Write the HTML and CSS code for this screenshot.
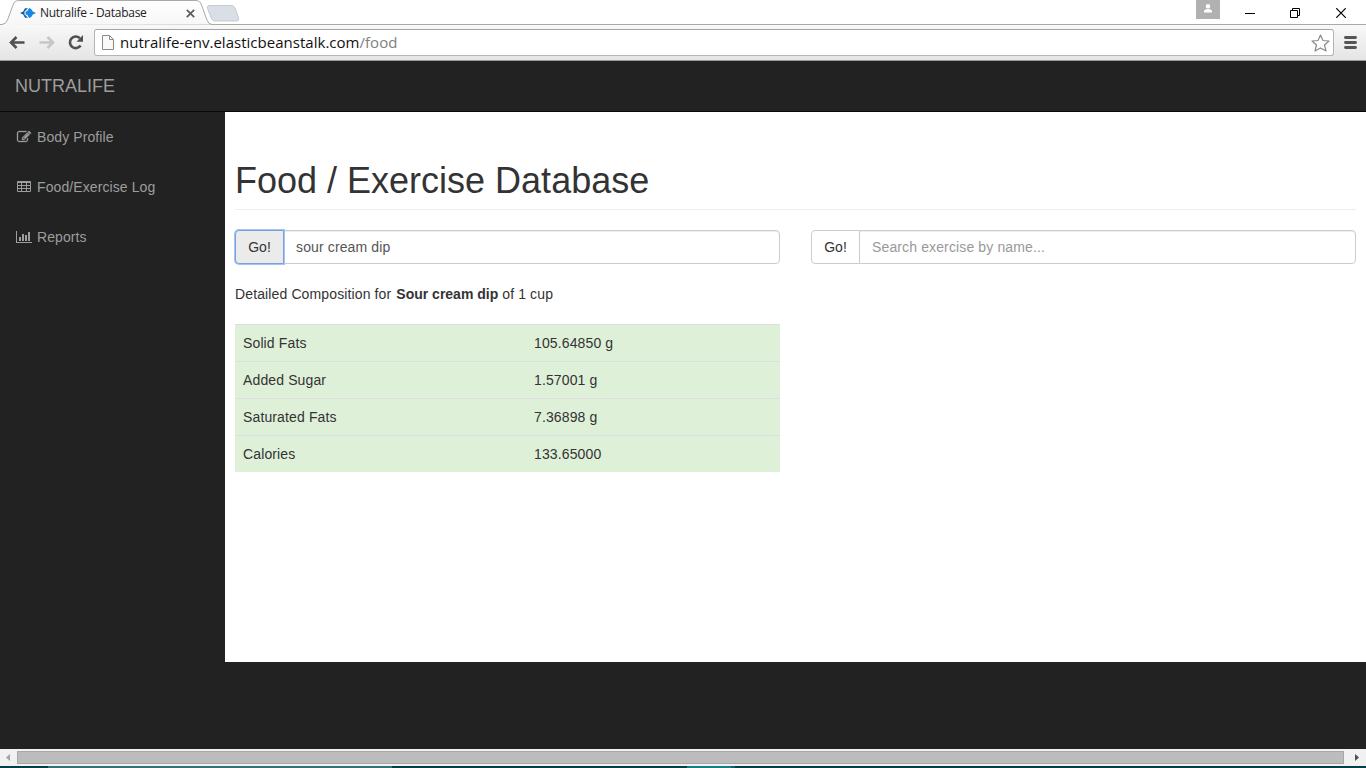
FILE: index.html
```
<!DOCTYPE html>
<html lang="en">
<head>
<meta charset="utf-8">
<title>Nutralife - Database</title>
<link rel="stylesheet" href="styles.css">
</head>
<body>
<header class="chrome">
  <div class="tabstrip">
    <svg class="tab-shape" width="245" height="25" viewBox="0 0 245 25">
      <defs><linearGradient id="tabfill" x1="0" y1="0" x2="0" y2="1"><stop offset="0" stop-color="#fefefe"/><stop offset="1" stop-color="#f7f7f7"/></linearGradient></defs>
      <path d="M0 25V24.5H2Q6 24 7.500 20L13 5Q14.500 .5 18.500 .5H196Q200 .5 201.500 5L207 20Q208.500 24.500 212 24.500H245" fill="url(#tabfill)" stroke="#a9a9a9"/>
      <path d="M210 5.500H231Q234 5.500 235 8L238.500 18Q239.500 21 236.500 21H215Q212.500 21 211.500 18.500L207.500 8.500Q206.500 5.500 210 5.500Z" fill="#d9dee7" stroke="#c6c9ce"/>
    </svg>
    <div class="tab">
      <svg class="favicon" width="16" height="10" viewBox="0 0 16 10"><path d="M5 .3H8L4.500 3.500V6.500L8 9.700H5L3.200 6.500L0 5L3.200 3.500Z" fill="#115a9e"/><path d="M9.500 0Q11.500 .5 12.800 3.500L16 5L12.800 6.500Q11.500 9.500 9.500 10Q8 9 7.300 6.700H5.600V3.300H7.300Q8 1 9.500 0Z" fill="#1687e4"/></svg>
      <span class="tab-title">Nutralife - Database</span>
      <svg class="tab-close" width="9" height="9" viewBox="0 0 9 9"><path d="M.8.8L8.200 8.200M8.200.8L.8 8.200" stroke="#5a5a5a" stroke-width="1.700"/></svg>
    </div>
    <div class="window-controls">
      <span class="avatar"><svg width="10" height="9" viewBox="0 0 10 9"><circle cx="5" cy="2.200" r="2.200" fill="#fff"/><path d="M1 8.500V7.500Q1 5 5 5T9 7.500V8.500Z" fill="#fff"/></svg></span>
      <svg width="10" height="10" viewBox="0 0 10 10"><path d="M0 5.500H10" stroke="#000"/></svg>
      <svg width="10" height="10" viewBox="0 0 10 10"><path d="M.5 2.500H7.500V9.500H.5ZM2.500 2.500V.5H9.500V7.500H7.500" fill="none" stroke="#000"/></svg>
      <svg width="10" height="10" viewBox="0 0 10 10"><path d="M.2.2L9.800 9.800M9.800.2L.2 9.800" stroke="#000" stroke-width="1.200"/></svg>
    </div>
  </div>
  <div class="toolbar">
    <svg class="back" width="16" height="13" viewBox="0 0 16 13"><path d="M7.500 1L2 6.500L7.500 12M2 6.500H15.500" fill="none" stroke="#505050" stroke-width="2.600"/></svg>
    <svg class="forward" width="16" height="13" viewBox="0 0 16 13"><path d="M8.500 1L14 6.500L8.500 12M14 6.500H.5" fill="none" stroke="#c6c6c6" stroke-width="2.600"/></svg>
    <svg class="reload" width="16" height="15" viewBox="0 0 16 15"><path d="M12.600 10.500A5.800 5.800 0 1 1 11.800 3.200" fill="none" stroke="#505050" stroke-width="2.600"/><path d="M15 0V6.700H8.500Z" fill="#505050"/></svg>
    <div class="omnibox">
      <svg class="page-icon" width="12" height="15" viewBox="0 0 12 15"><path d="M.5.5H7.500L11.500 4.500V14.500H.5ZM7.500.5V4.500H11.500" fill="#fafafa" stroke="#8a8a8a"/></svg>
      <span class="url">nutralife-env.elasticbeanstalk.com<span class="path">/food</span></span>
      <svg class="star" width="19" height="18" viewBox="0 0 19 18"><path d="M9.500 1L12 6.500L18 7L13.500 11L15 17L9.500 13.900L4 17L5.500 11L1 7L7 6.500Z" fill="#fff" stroke="#8a8a8a" stroke-width="1.200" stroke-linejoin="round"/></svg>
    </div>
    <svg class="menu" width="13" height="13" viewBox="0 0 13 13"><path d="M1.500 1.500H11.500M1.500 6.500H11.500M1.500 11.500H11.500" stroke="#555" stroke-width="2.900" stroke-linecap="round"/></svg>
  </div>
</header>
<div class="page">
  <nav class="navbar"><a class="brand">NUTRALIFE</a></nav>
  <div class="wrapper">
    <ul class="side-nav">
      <li><svg class="icon" width="14" height="14" viewBox="0 0 1792 1792"><path stroke="currentColor" stroke-width="40" d="M888 1184l116-116-152-152-116 116v56h96v96h56zm440-720q-16-16-33 1l-350 350q-17 17-1 33t33-1l350-350q17-17 1-33zm80 594v190q0 119-84.500 203.500t-203.500 84.500h-832q-119 0-203.500-84.500t-84.500-203.500v-832q0-119 84.500-203.500t203.500-84.500h832q63 0 117 25 15 7 18 23 3 17-9 29l-49 49q-14 14-32 8-23-6-45-6h-832q-66 0-113 47t-47 113v832q0 66 47 113t113 47h832q66 0 113-47t47-113v-126q0-13 9-22l64-64q15-15 35-7t20 29zm-96-738l288 288-672 672h-288v-288zm444 132l-92 92-288-288 92-92q28-28 68-28t68 28l152 152q28 28 28 68t-28 68z"/></svg><span>Body Profile</span></li>
      <li><svg class="icon" width="14" height="14" viewBox="0 0 14 14"><path fill-rule="evenodd" d="M1 1H13Q14 1 14 2V11Q14 12 13 12H1Q0 12 0 11V2Q0 1 1 1ZM1 3V5H4V3ZM5 3V5H9V3ZM10 3V5H13V3ZM1 6V8H4V6ZM5 6V8H9V6ZM10 6V8H13V6ZM1 9V11H4V9ZM5 9V11H9V9ZM10 9V11H13V9Z"/></svg><span>Food/Exercise Log</span></li>
      <li><svg class="icon" width="16" height="14" viewBox="0 0 16 14"><path d="M0 1H1V12H16V13H0ZM3 7H5V11H3ZM6 4H8V11H6ZM9 5H11V11H9ZM12 2H14V11H12Z"/></svg><span>Reports</span></li>
    </ul>
    <main class="content">
      <h1>Food / Exercise Database</h1>
      <div class="columns">
        <section>
          <div class="input-group"><button class="go focused">Go!</button><div class="field">sour cream dip</div></div>
          <p class="caption">Detailed Composition for <b>Sour cream dip</b> of 1 cup</p>
          <table>
            <tr><td class="name">Solid Fats</td><td>105.64850 g</td></tr>
            <tr><td>Added Sugar</td><td>1.57001 g</td></tr>
            <tr><td>Saturated Fats</td><td>7.36898 g</td></tr>
            <tr><td>Calories</td><td>133.65000</td></tr>
          </table>
        </section>
        <section>
          <div class="input-group"><button class="go">Go!</button><div class="field placeholder">Search exercise by name...</div></div>
        </section>
      </div>
    </main>
  </div>
</div>
<div class="scrollbar">
  <svg width="17" height="17" viewBox="0 0 17 17"><path d="M10 5V12L6 8.500Z" fill="#a3a3a3"/></svg>
  <div class="thumb"></div>
  <svg width="22" height="17" viewBox="0 0 22 17"><path d="M11 5V12L15 8.500Z" fill="#505050"/></svg>
</div>
<div class="taskbar"><i class="task"></i><i class="active"></i><i class="edge"></i></div>
</body>
</html>
```
FILE: styles.css
```
* { box-sizing: border-box; }
body { margin: 0; width: 1366px; height: 768px; overflow: hidden; display: flex; flex-direction: column; background: #222; font: 14px/20px "Liberation Sans", Arial, sans-serif; color: #333; }
svg { display: block; flex: none; }
.chrome { height: 61px; flex: none; font-family: "Open Sans", sans-serif; }
.tabstrip { height: 25px; position: relative; display: flex; justify-content: space-between; background: #fff; border-bottom: 1px solid #a9a9a9; }
.tab-shape { position: absolute; left: 0; top: 0; }
.tab { position: relative; display: flex; align-items: center; width: 195px; height: 25px; padding: 1px 0 0 20px; }
.tab-title { margin-left: 4px; font-size: 12px; letter-spacing: -.27px; color: #222; white-space: nowrap; flex: 1; }
.window-controls { display: flex; align-items: flex-start; padding-right: 20px; }
.window-controls > svg { margin-top: 8px; margin-left: 36px; }
.window-controls > svg:nth-child(2) { margin-left: 25px; }
.window-controls > svg:nth-child(3) { margin-left: 35px; }
.avatar { width: 24px; height: 19px; background: #b1b1b1; display: flex; justify-content: center; padding-top: 4px; }
.toolbar { height: 36px; display: flex; align-items: center; padding: 0 9px; background: linear-gradient(#f8f8f8, #e5e5e5); border-bottom: 1px solid #999; }
.forward { margin-left: 14px; }
.reload { margin-left: 13px; }
.omnibox { width: 1241px; height: 27px; margin-left: 10px; display: flex; align-items: center; padding: 0 3px 0 7px; border: 1px solid #b5b5b5; border-top-color: #a4a4a4; border-radius: 3px; background: #fff; }
.url { margin-left: 6px; padding-bottom: 2px; flex: 1; font-size: 15px; letter-spacing: .02px; color: #111; white-space: nowrap; }
.path { color: #808080; }
.menu { margin-left: 10px; }
.page { height: 688px; flex: none; }
.navbar { height: 51px; border-bottom: 1px solid #080808; padding: 15px; font-size: 18px; color: #9d9d9d; }
.wrapper { display: flex; }
.side-nav { width: 225px; margin: 0; padding: 0; list-style: none; color: #9d9d9d; letter-spacing: .09px; }
.side-nav li { height: 50px; padding: 15px; display: flex; align-items: center; }
.side-nav span { margin-left: 4px; }
.icon { fill: currentColor; width: 18px; height: 14px; }
.content { width: 1141px; height: 550px; background: #fff; padding: 10px; }
h1 { margin: 39px 0 20px; height: 49px; border-bottom: 1px solid #eee; font-size: 36px; line-height: 39.6px; font-weight: 400; }
.columns { display: grid; grid-template-columns: 545px 545px; gap: 31px; }
.input-group { height: 34px; display: flex; letter-spacing: .13px; }
.go { width: 49px; padding: 0; border: 1px solid #ccc; border-radius: 4px 0 0 4px; background: #fff; font: inherit; color: #333; }
.focused { background: #ebebeb; border-color: #7ca0dd; box-shadow: 0 0 0 1px #a5c4f3; z-index: 1; }
.field { flex: 1; margin-left: -1px; border: 1px solid #ccc; border-radius: 0 4px 4px 0; padding: 6px 12px; color: #555; box-shadow: inset 0 1px 1px rgba(0,0,0,.075); }
.placeholder { color: #999; }
.caption { margin: 20px 0; letter-spacing: .125px; }
.caption b { margin-left: 1px; letter-spacing: 0; }
table { width: 545px; border-collapse: separate; border-spacing: 0; background: #dff0d8; letter-spacing: .13px; }
td { height: 37px; padding: 8px; border-top: 1px solid #ddd; }
.name { width: 291px; }
.scrollbar { height: 17px; flex: none; display: flex; align-items: center; background: #f1f1f1; }
.thumb { flex: 1; height: 13px; background: #bcbcbc; border: 1px solid #a8a8a8; }
.taskbar { height: 2px; display: flex; background: #003f48; }
.task { width: 344px; margin-left: 48px; background: #347074; }
.active { width: 44px; margin-left: 295px; background: #187c85; }
.edge { width: 4px; background: #126069; }
```
